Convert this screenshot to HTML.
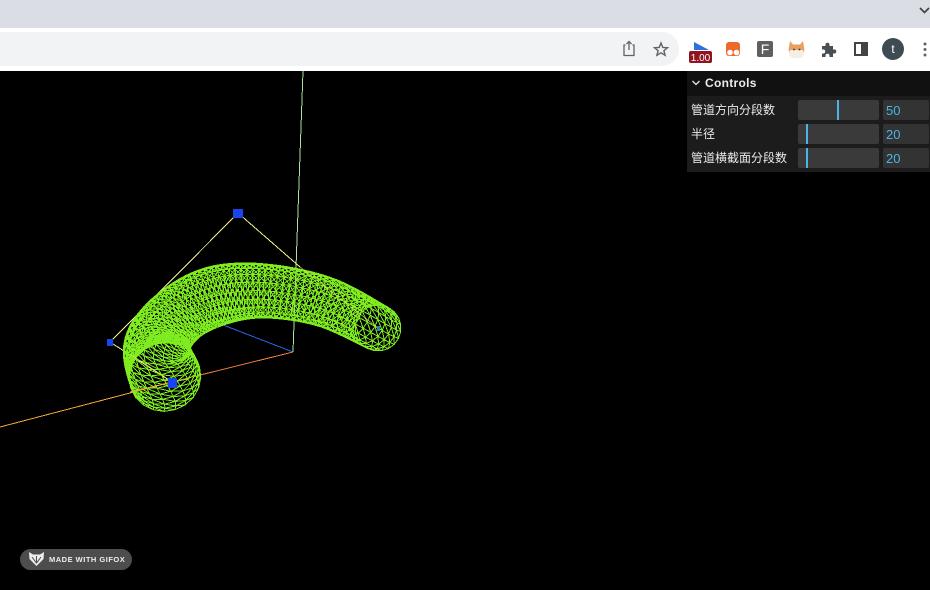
<!DOCTYPE html>
<html><head><meta charset="utf-8">
<style>
html,body{margin:0;padding:0;background:#000;}
#r{position:relative;width:930px;height:590px;overflow:hidden;background:#000;font-family:"Liberation Sans","Noto Sans CJK SC",sans-serif;}
.a{position:absolute;}
.lb{position:absolute;left:691px;color:#ebebeb;font-size:12px;line-height:20px;font-family:"Liberation Sans","Noto Sans CJK SC",sans-serif;white-space:nowrap;}
.sl{position:absolute;left:798px;width:81px;height:20px;background:#3a3a3a;border-radius:2px;}
.th{position:absolute;top:0;width:2px;height:20px;background:#4cb4e6;}
.nm{position:absolute;left:883px;width:46px;height:20px;background:#333;border-radius:2px;color:#4cb4e6;font-size:13px;line-height:21px;text-indent:3px;}
</style></head><body>
<div id="r">
<div class="a" style="left:0;top:0;width:930px;height:28px;background:#dadde4"></div>
<div class="a" style="left:0;top:28px;width:930px;height:43px;background:#fff"></div>
<div class="a" style="left:-20px;top:32px;width:699px;height:34px;background:#f1f3f4;border-radius:17px"></div>
<svg class="a" style="left:0;top:0" width="930" height="71" viewBox="0 0 930 71">
<path d="M920 8l4.500 4.500 4.500-4.500" fill="none" stroke="#3c4043" stroke-width="1.600"/>
<path d="M625.500 45h-1.500v10.500h10V45h-1.500M629 50V42M626.500 44l2.500-2.500 2.500 2.500" fill="none" stroke="#5f6368" stroke-width="1.300"/>
<path d="M661 43l1.800 4.400 4.700.3-3.600 3 1.200 4.600-4.100-2.500-4.100 2.500 1.200-4.600-3.600-3 4.700-.3z" fill="none" stroke="#5f6368" stroke-width="1.400"/>
<path d="M694 42l15 8h-15z" fill="#2f6fde"/>
<rect x="689" y="51" width="23" height="12" rx="2" fill="#8f1420"/>
<rect x="726" y="42" width="14" height="14" rx="3" fill="#ee6a2c"/>
<circle cx="730" cy="52.500" r="2.800" fill="#fff"/><circle cx="736.500" cy="52.500" r="2.800" fill="#fff"/>
<rect x="757" y="41" width="16" height="16" rx="2" fill="#5f5f5f"/>
<path d="M790 41l3 3.500h7l3-3.500 1.500 9-3 7.500h-10l-3-7.500z" fill="#e9a15c"/>
<path d="M790 50h13l1 5-3 3h-9l-3-3z" fill="#f4efe6"/>
<circle cx="794" cy="49.500" r=".9" fill="#333"/><circle cx="799.500" cy="49.500" r=".9" fill="#333"/>
<path d="M822 46h3.500v-1.300a2 2 0 0 1 4 0V46h3.500v3.500h1.300a2 2 0 0 1 0 4H833V57h-3.500v-1.200a2 2 0 0 0-4 0V57H822v-3.500h1.200a2 2 0 0 0 0-4H822z" fill="#4a4f54"/>
<rect x="855" y="43" width="12" height="12" fill="none" stroke="#444" stroke-width="2"/>
<rect x="861" y="43" width="6" height="12" fill="#444"/>
<circle cx="893" cy="49" r="11" fill="#3f4b53"/>
<circle cx="925" cy="44" r="1.500" fill="#5f6368"/><circle cx="925" cy="49.500" r="1.500" fill="#5f6368"/><circle cx="925" cy="55" r="1.500" fill="#5f6368"/>
<text x="700.500" y="61" font-size="10" fill="#fff" text-anchor="middle" font-family="Liberation Sans">1.00</text>
<text x="765" y="54" font-size="14" fill="#fff" text-anchor="middle" font-family="Liberation Sans">F</text>
<text x="893" y="53" font-size="12" fill="#fff" text-anchor="middle" font-family="Liberation Sans">t</text>
</svg>

<svg class="a" style="left:0;top:0" width="930" height="590" viewBox="0 0 930 590" shape-rendering="crispEdges">
<path d="M303 71L293 352" stroke="#a8e39c" fill="none"/>
<path d="M293 352L218 323" stroke="#2f62e8" fill="none"/>
<path d="M293 352L172 382" stroke="#ee7a3c" fill="none"/>
<path d="M172 382L0 427" stroke="#f2a63c" fill="none"/>
<path d="M172 382L110 342L238 213L300 267" stroke="#f4f48c" fill="none"/>
<g id="m" fill="none" stroke="#7eec1e" stroke-width="1"></g>
<path d="M172 382L130 354M300 267L378 328" stroke="#e4ee60" fill="none" opacity=".6"/>
<path d="M172 382L130 392" stroke="#f2a63c" fill="none"/>
<rect x="233" y="209" width="10" height="9" fill="#1c44ee"/>
<rect x="168" y="378" width="9" height="10" fill="#1c44ee"/>
<rect x="107" y="339" width="6" height="7" fill="#1c44ee"/>
<rect x="377" y="326" width="3" height="5" fill="#2f7fc0"/>
</svg>

<div class="a" style="left:687px;top:71px;width:243px;height:101px;background:#1c1c1c"></div>
<div class="a" style="left:687px;top:71px;width:243px;height:25px;background:#111"></div>
<svg class="a" style="left:691px;top:78px" width="10" height="10"><path d="M1.500 3l3.500 3.500L8.500 3" fill="none" stroke="#ebebeb" stroke-width="1.300"/></svg>
<div class="a" style="left:705px;top:73px;color:#ebebeb;font-size:12px;font-weight:bold;line-height:20px;letter-spacing:.3px">Controls</div>
<div class="lb" style="top:100px">管道方向分段数</div>
<div class="sl" style="top:100px"><div class="th" style="left:39px"></div></div>
<div class="nm" style="top:100px">50</div>
<div class="lb" style="top:124px">半径</div>
<div class="sl" style="top:124px"><div class="th" style="left:8px"></div></div>
<div class="nm" style="top:124px">20</div>
<div class="lb" style="top:148px">管道横截面分段数</div>
<div class="sl" style="top:148px"><div class="th" style="left:8px"></div></div>
<div class="nm" style="top:148px">20</div>

<div class="a" style="left:20px;top:549px;width:112px;height:21px;background:#4d4d4d;border-radius:11px"></div>
<svg class="a" style="left:28px;top:551px" width="17" height="16" viewBox="0 0 17 16"><path d="M1 1l4 2.500h7L16 1l-.5 7L8.500 15 1.500 8z" fill="#eee"/><path d="M4 6l4.500 6L13 6M8.500 12V5" stroke="#4d4d4d" fill="none"/></svg>
<div class="a" style="left:49px;top:554px;color:#eee;font-size:7.500px;font-weight:bold;line-height:11px;letter-spacing:.5px;white-space:nowrap">MADE WITH GIFOX</div>
</div>
<script>
(function(){
var K=[[165,377,36,.95],[157,346,33,.45],[178,316,30,.2],[216,296,30,.14],[265,291,27,.14],[325,302,25,.25],[378,328,23,1]];
function cr(a,b,c,d,t){return .5*(2*b+(c-a)*t+(2*a-5*b+4*c-d)*t*t+(3*b-a-3*c+d)*t*t*t);}
function at(u,j){var n=K.length-1,f=u*n,i=Math.min(Math.floor(f),n-1),t=f-i;
var a=K[Math.max(i-1,0)][j],b=K[i][j],c=K[i+1][j],d=K[Math.min(i+2,n)][j];return cr(a,b,c,d,t);}
var N=58,M=20,P=[],i,j;
for(i=0;i<=N;i++){var u=i/N,x=at(u,0),y=at(u,1),r=at(u,2),f=at(u,3);
var e=.01,u0=Math.max(u-e,0),u1=Math.min(u+e,1);
var tx=at(u1,0)-at(u0,0),ty=at(u1,1)-at(u0,1),l=Math.sqrt(tx*tx+ty*ty)||1;tx/=l;ty/=l;
var nx=-ty,ny=tx,row=[];
for(j=0;j<M;j++){var a=j/M*Math.PI*2,c=Math.cos(a),s=Math.sin(a);
row.push([(x+r*c*nx+r*f*s*tx).toFixed(1),(y+r*c*ny+r*f*s*ty).toFixed(1)]);}
P.push(row);}
var d='';
for(i=0;i<=N;i++){for(j=0;j<M;j++){var p=P[i][j],q=P[i][(j+1)%M];
d+='M'+p[0]+' '+p[1]+'L'+q[0]+' '+q[1];
if(i<N){var g=P[i+1][j];
d+='M'+p[0]+' '+p[1]+'L'+g[0]+' '+g[1];
d+='M'+q[0]+' '+q[1]+'L'+g[0]+' '+g[1];}}}
var o=document.createElementNS('http://www.w3.org/2000/svg','path');
o.setAttribute('d',d);document.getElementById('m').appendChild(o);
})();
</script>
</body></html>
